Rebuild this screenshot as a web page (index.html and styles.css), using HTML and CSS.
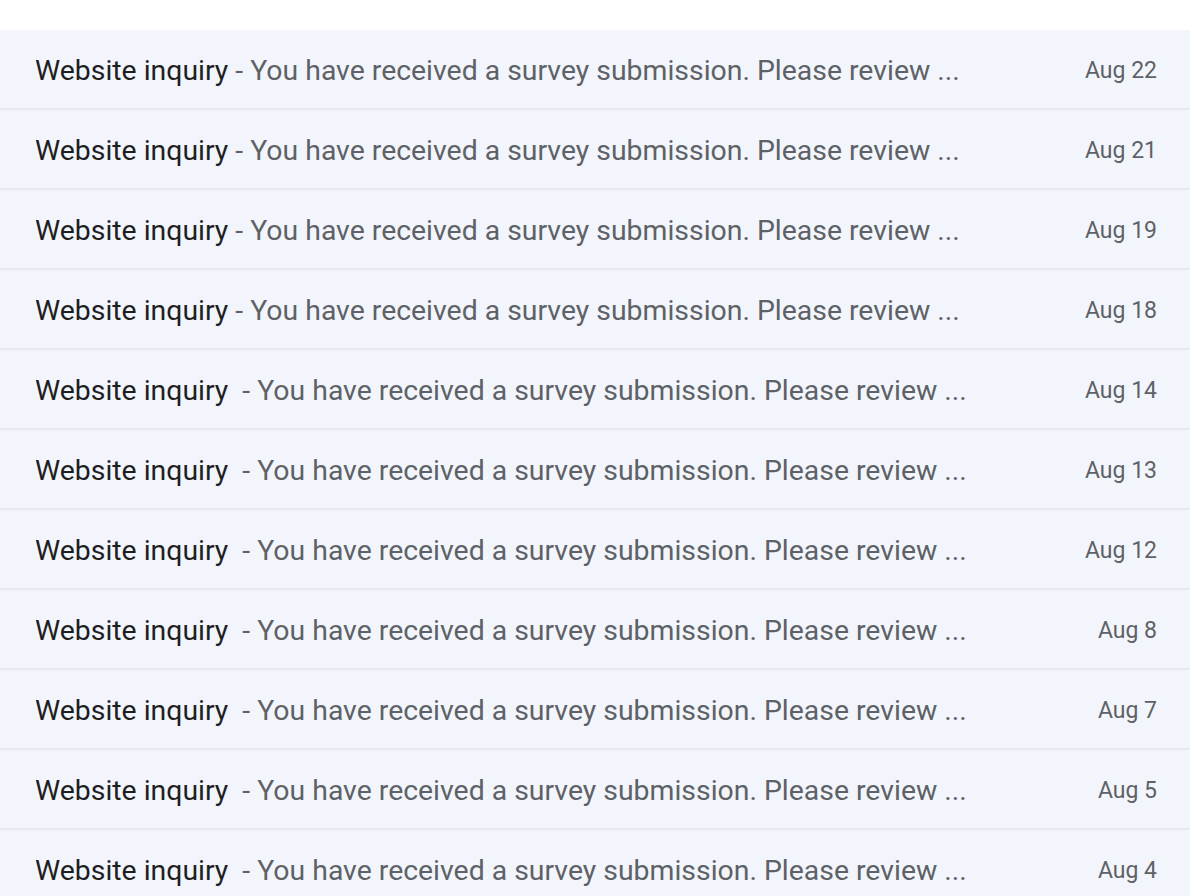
FILE: index.html
```html
<!DOCTYPE html>
<html lang="en">
<head>
    <meta charset="UTF-8">
    <meta name="viewport" content="width=device-width, initial-scale=1.0">
    <title>Inbox</title>
    <link rel="stylesheet" href="styles.css">
</head>
<body>

    <div class="mail-list">
        <div class="mail-row">
            <div class="mail-main"><span class="mail-subject">Website inquiry</span><span class="mail-snippet"> - You have received a survey submission. Please review ...</span></div>
            <div class="mail-date">Aug 22</div>
        </div>
        <div class="mail-row">
            <div class="mail-main"><span class="mail-subject">Website inquiry</span><span class="mail-snippet"> - You have received a survey submission. Please review ...</span></div>
            <div class="mail-date">Aug 21</div>
        </div>
        <div class="mail-row">
            <div class="mail-main"><span class="mail-subject">Website inquiry</span><span class="mail-snippet"> - You have received a survey submission. Please review ...</span></div>
            <div class="mail-date">Aug 19</div>
        </div>
        <div class="mail-row">
            <div class="mail-main"><span class="mail-subject">Website inquiry</span><span class="mail-snippet"> - You have received a survey submission. Please review ...</span></div>
            <div class="mail-date">Aug 18</div>
        </div>
        <div class="mail-row">
            <div class="mail-main"><span class="mail-subject wide">Website inquiry</span><span class="mail-snippet"> - You have received a survey submission. Please review ...</span></div>
            <div class="mail-date">Aug 14</div>
        </div>
        <div class="mail-row">
            <div class="mail-main"><span class="mail-subject wide">Website inquiry</span><span class="mail-snippet"> - You have received a survey submission. Please review ...</span></div>
            <div class="mail-date">Aug 13</div>
        </div>
        <div class="mail-row">
            <div class="mail-main"><span class="mail-subject wide">Website inquiry</span><span class="mail-snippet"> - You have received a survey submission. Please review ...</span></div>
            <div class="mail-date">Aug 12</div>
        </div>
        <div class="mail-row">
            <div class="mail-main"><span class="mail-subject wide">Website inquiry</span><span class="mail-snippet"> - You have received a survey submission. Please review ...</span></div>
            <div class="mail-date">Aug 8</div>
        </div>
        <div class="mail-row">
            <div class="mail-main"><span class="mail-subject wide">Website inquiry</span><span class="mail-snippet"> - You have received a survey submission. Please review ...</span></div>
            <div class="mail-date">Aug 7</div>
        </div>
        <div class="mail-row">
            <div class="mail-main"><span class="mail-subject wide">Website inquiry</span><span class="mail-snippet"> - You have received a survey submission. Please review ...</span></div>
            <div class="mail-date">Aug 5</div>
        </div>
        <div class="mail-row">
            <div class="mail-main"><span class="mail-subject wide">Website inquiry</span><span class="mail-snippet"> - You have received a survey submission. Please review ...</span></div>
            <div class="mail-date">Aug 4</div>
        </div>
    </div>

</body>
</html>
```

FILE: styles.css
```css
body {
    font-family: Roboto, "Noto Sans", Arial, sans-serif;
    background-color: #fff;
    margin: 0;
    padding: 30px 8px 0 0;
    overflow: hidden;
}
.mail-list {
    width: 1190px;
}
.mail-row {
    display: flex;
    align-items: center;
    justify-content: space-between;
    height: 76px;
    padding: 2px 33px 0 35px;
    background-color: #f2f6fc;
    border-bottom: 2px solid #e6e9ef;
}
.mail-main {
    white-space: nowrap;
    font-size: 28.4px;
}
.mail-subject {
    color: #1f1f1f;
}
.mail-subject.wide {
    margin-right: 7px;
}
.mail-snippet {
    color: #5e6166;
}
.mail-date {
    font-size: 23px;
    color: #5e6166;
}
```
